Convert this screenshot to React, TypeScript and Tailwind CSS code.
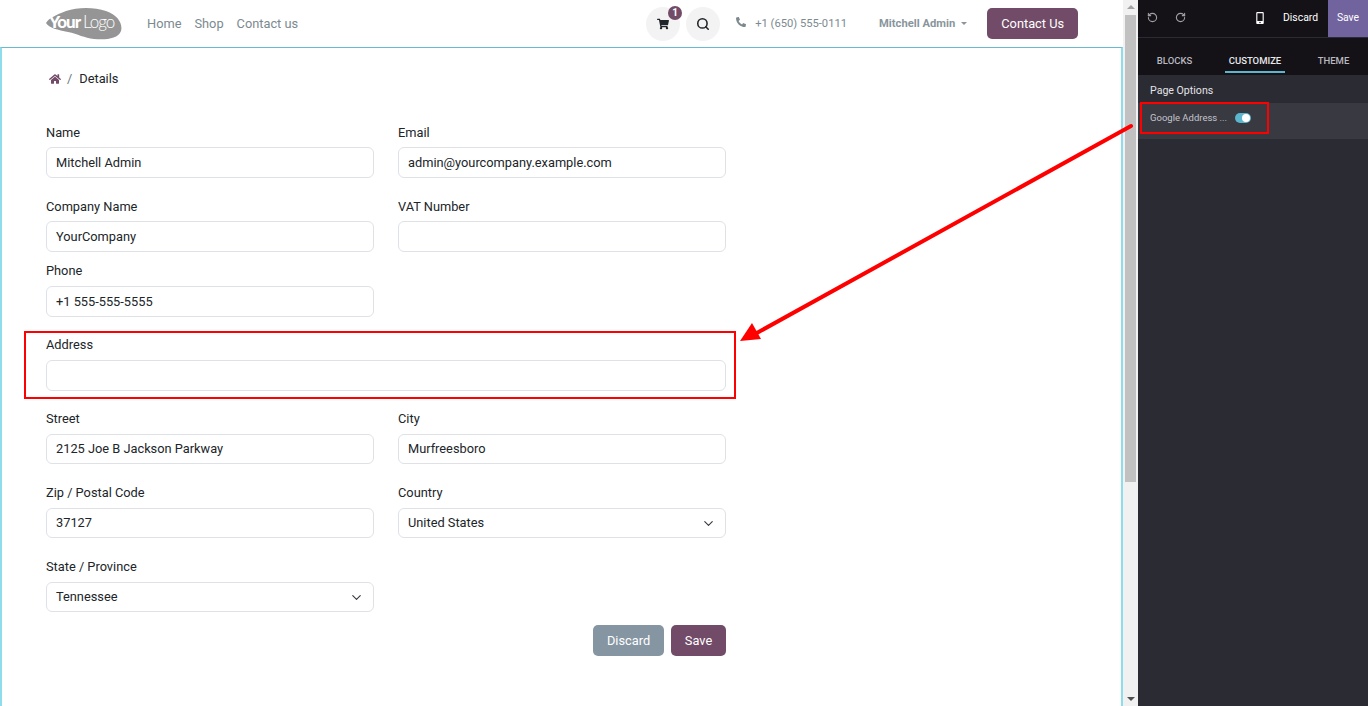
import React from 'react';
import { ChevronDown, RotateCcw, RotateCw, Search } from 'lucide-react';
import { FaHome, FaMobileAlt, FaPhone, FaShoppingCart } from 'react-icons/fa';

function Logo() {
  return (
    <svg width="76" height="33" viewBox="0 0 76 33" className="block">
      <path d="M0 16 C3 11 10 8 20 4 C32 0 48 0 60 4 C72 8 77 17 75 24 C72 32 60 33 48 32 C38 31 32 27 22 25 C12 23 3 21 0 16 Z" fill="#959595" />
      <text x="3" y="21" fontFamily="Lato, sans-serif" fontSize="17" fontWeight="900" letterSpacing="-1" fill="#fff">Your</text>
      <text x="37" y="21" fontFamily="Lato, sans-serif" fontSize="17" fontWeight="300" letterSpacing="-1" fill="#fff">Logo</text>
    </svg>
  );
}

function Field({ label, value, h = 'h-[31px]', mb = 'mb-1', w = 'w-[328px]', select }: { label: string; value?: string; h?: string; mb?: string; w?: string; select?: boolean }) {
  return (
    <div className={w}>
      <div className={`h-5 leading-5 text-[12.8px] text-[#212529] ${mb}`}>{label}</div>
      <div className={`${h} flex items-center justify-between rounded-[6px] border border-[#dee2e6] bg-white pl-[9px] pr-[9px] text-[12.8px] text-[#212529]`}>
        <span>{value}</span>
        {select && <ChevronDown size={15} strokeWidth={1.8} className="text-[#343a40]" />}
      </div>
    </div>
  );
}

function Header() {
  return (
    <div className="flex h-[47px] items-center bg-white pl-[46px]">
      <Logo />
      <nav className="ml-[25px] flex gap-[13px] text-[12.8px] text-[#7c8a90]">
        <span>Home</span>
        <span>Shop</span>
        <span>Contact us</span>
      </nav>
      <div className="relative ml-[348px] flex h-[34px] w-[34px] items-center justify-center rounded-full bg-[#f3f3f3] text-[#212529]">
        <FaShoppingCart size={12} />
        <span className="absolute -top-[1px] left-[22px] flex h-[14px] w-[14px] items-center justify-center rounded-full bg-[#714b67] text-[10px] font-bold text-white">1</span>
      </div>
      <div className="ml-[6px] flex h-[34px] w-[34px] items-center justify-center rounded-full bg-[#f3f3f3] text-[#212529]">
        <Search size={14} strokeWidth={2.7} />
      </div>
      <FaPhone size={10} className="ml-[16px] -mt-[3px] -scale-x-100 text-[#7c8a90]" />
      <span className="ml-[9px] pt-px text-[11.2px] text-[#7c8a90]">+1 (650) 555-0111</span>
      <span className="ml-[32px] pt-px text-[11.2px] font-bold text-[#88959c]">Mitchell Admin</span>
      <span className="ml-[6px] h-0 w-0 border-x-[3px] border-t-[3px] border-x-transparent border-t-[#88959c]" />
      <div className="ml-[20px] flex h-[31px] w-[91px] items-center justify-center rounded-[5px] bg-[#714b67] text-[12.8px] text-white">Contact Us</div>
    </div>
  );
}

function Form() {
  return (
    <div className="h-full border-x-2 border-t border-x-[#8fdcec] border-t-[#6bb8cf] bg-white pl-[44px]">
      <div className="mt-[21px] flex h-[20px] items-center pl-[3px] text-[12.8px] text-[#212529]">
        <FaHome size={12} className="text-[#714b67]" />
        <span className="ml-[6px] mr-[7px] text-[#6c757d]">/</span>
        <span>Details</span>
      </div>
      <div className="mt-[34px] flex gap-6">
        <Field label="Name" value="Mitchell Admin" />
        <Field label="Email" value="admin@yourcompany.example.com" />
      </div>
      <div className="mt-[19px] flex gap-6">
        <Field label="Company Name" value="YourCompany" />
        <Field label="VAT Number" />
      </div>
      <div className="mt-[9px]">
        <Field label="Phone" value="+1 555-555-5555" mb="mb-[5px]" />
      </div>
      <div className="mt-[18px]">
        <Field label="Address" mb="mb-[5px]" w="w-[680px]" />
      </div>
      <div className="mt-[18px] flex gap-6">
        <Field label="Street" value="2125 Joe B Jackson Parkway" h="h-[30px]" mb="mb-[5px]" />
        <Field label="City" value="Murfreesboro" h="h-[30px]" mb="mb-[5px]" />
      </div>
      <div className="mt-[19px] flex gap-6">
        <Field label="Zip / Postal Code" value="37127" h="h-[30px]" mb="mb-[5px]" />
        <Field label="Country" value="United States" h="h-[30px]" mb="mb-[5px]" select />
      </div>
      <div className="mt-[19px]">
        <Field label="State / Province" value="Tennessee" h="h-[30px]" mb="mb-[5px]" select />
      </div>
      <div className="mt-[13px] flex w-[680px] justify-end gap-[7px] text-[12.8px] text-white">
        <div className="flex h-[31px] w-[71px] items-center justify-center rounded-[5px] bg-[#8595a2]">Discard</div>
        <div className="flex h-[31px] w-[55px] items-center justify-center rounded-[5px] bg-[#714b67]">Save</div>
      </div>
    </div>
  );
}

function Scrollbar() {
  return (
    <div className="flex h-full w-[15px] flex-col items-center bg-[#f1f1f1]">
      <div className="mt-[5px] h-0 w-0 border-x-[4px] border-b-[4px] border-x-transparent border-b-[#a3a3a3]" />
      <div className="mt-[6px] h-[467px] w-[11px] bg-[#c1c1c1]" />
      <div className="mt-auto mb-[5px] h-0 w-0 border-x-[4px] border-t-[4px] border-x-transparent border-t-[#505050]" />
    </div>
  );
}

function Sidebar() {
  return (
    <div className="flex h-full w-[230px] flex-col bg-[#2b2b33] text-white">
      <div className="flex h-[38px] border-b border-[#2b2b33] bg-[#141217]">
        <div className="flex h-[37px] flex-1 items-center pb-[2px]">
          <RotateCcw size={11} strokeWidth={2.4} className="ml-[9px] text-[#a0a0a5]" />
          <RotateCw size={11} strokeWidth={2.4} className="ml-[17px] text-[#a0a0a5]" />
          <FaMobileAlt size={12} className="ml-[68px] text-white" />
          <span className="ml-[17px] text-[10.4px]">Discard</span>
          <div className="ml-auto flex h-[37px] w-[40px] items-center justify-center self-start pb-[2px] bg-[#71639e] text-[10.4px]">Save</div>
        </div>
      </div>
      <div className="flex h-[37px] items-start bg-[#141217] text-[9.5px] font-medium text-[#b9b9c0]">
        <div className="flex h-[35px] w-[73px] items-center justify-center pt-[12px]">BLOCKS</div>
        <div className="ml-[14px] flex h-[35px] w-[60px] items-center justify-center border-b-2 border-[#5bb5cf] pt-[13px] text-[#e8e8ec]">CUSTOMIZE</div>
        <div className="flex h-[35px] flex-1 items-center justify-center pt-[12px] pl-[14px]">THEME</div>
      </div>
      <div className="flex h-[28px] items-center pl-3 pt-1 text-[10.6px] text-[#e4e4e8]">Page Options</div>
      <div className="flex h-[36px] items-center bg-[#393942] pb-[6px] pl-3 text-[9.5px] text-[#c4c4ca]">
        <span>Google Address ...</span>
        <span className="ml-2 flex h-[10px] w-[16px] items-center justify-end rounded-full bg-[#5bb5cf] pr-[1px]">
          <span className="h-2 w-2 rounded-full bg-white" />
        </span>
      </div>
    </div>
  );
}

export default function App() {
  return (
    <div className="relative flex h-[706px] w-[1368px] overflow-hidden bg-white font-['Roboto',sans-serif]">
      <div className="flex w-[1123px] flex-col">
        <Header />
        <div className="min-h-0 flex-1">
          <Form />
        </div>
      </div>
      <Scrollbar />
      <Sidebar />
      {/* annotations drawn over the screenshot */}
      <div className="absolute left-[24px] top-[331px] h-[68px] w-[712px] border-2 border-[#ff0000]" />
      <div className="absolute left-[1140px] top-[102px] h-[32px] w-[129px] border-2 border-[#ff0000]" />
      <svg className="absolute left-0 top-0" width="1368" height="706">
        <line x1="1131" y1="126" x2="755" y2="334" stroke="#ff0000" strokeWidth="4" strokeLinecap="round" />
        <polygon points="740,341 752,323 761,339" fill="#ff0000" />
      </svg>
    </div>
  );
}
